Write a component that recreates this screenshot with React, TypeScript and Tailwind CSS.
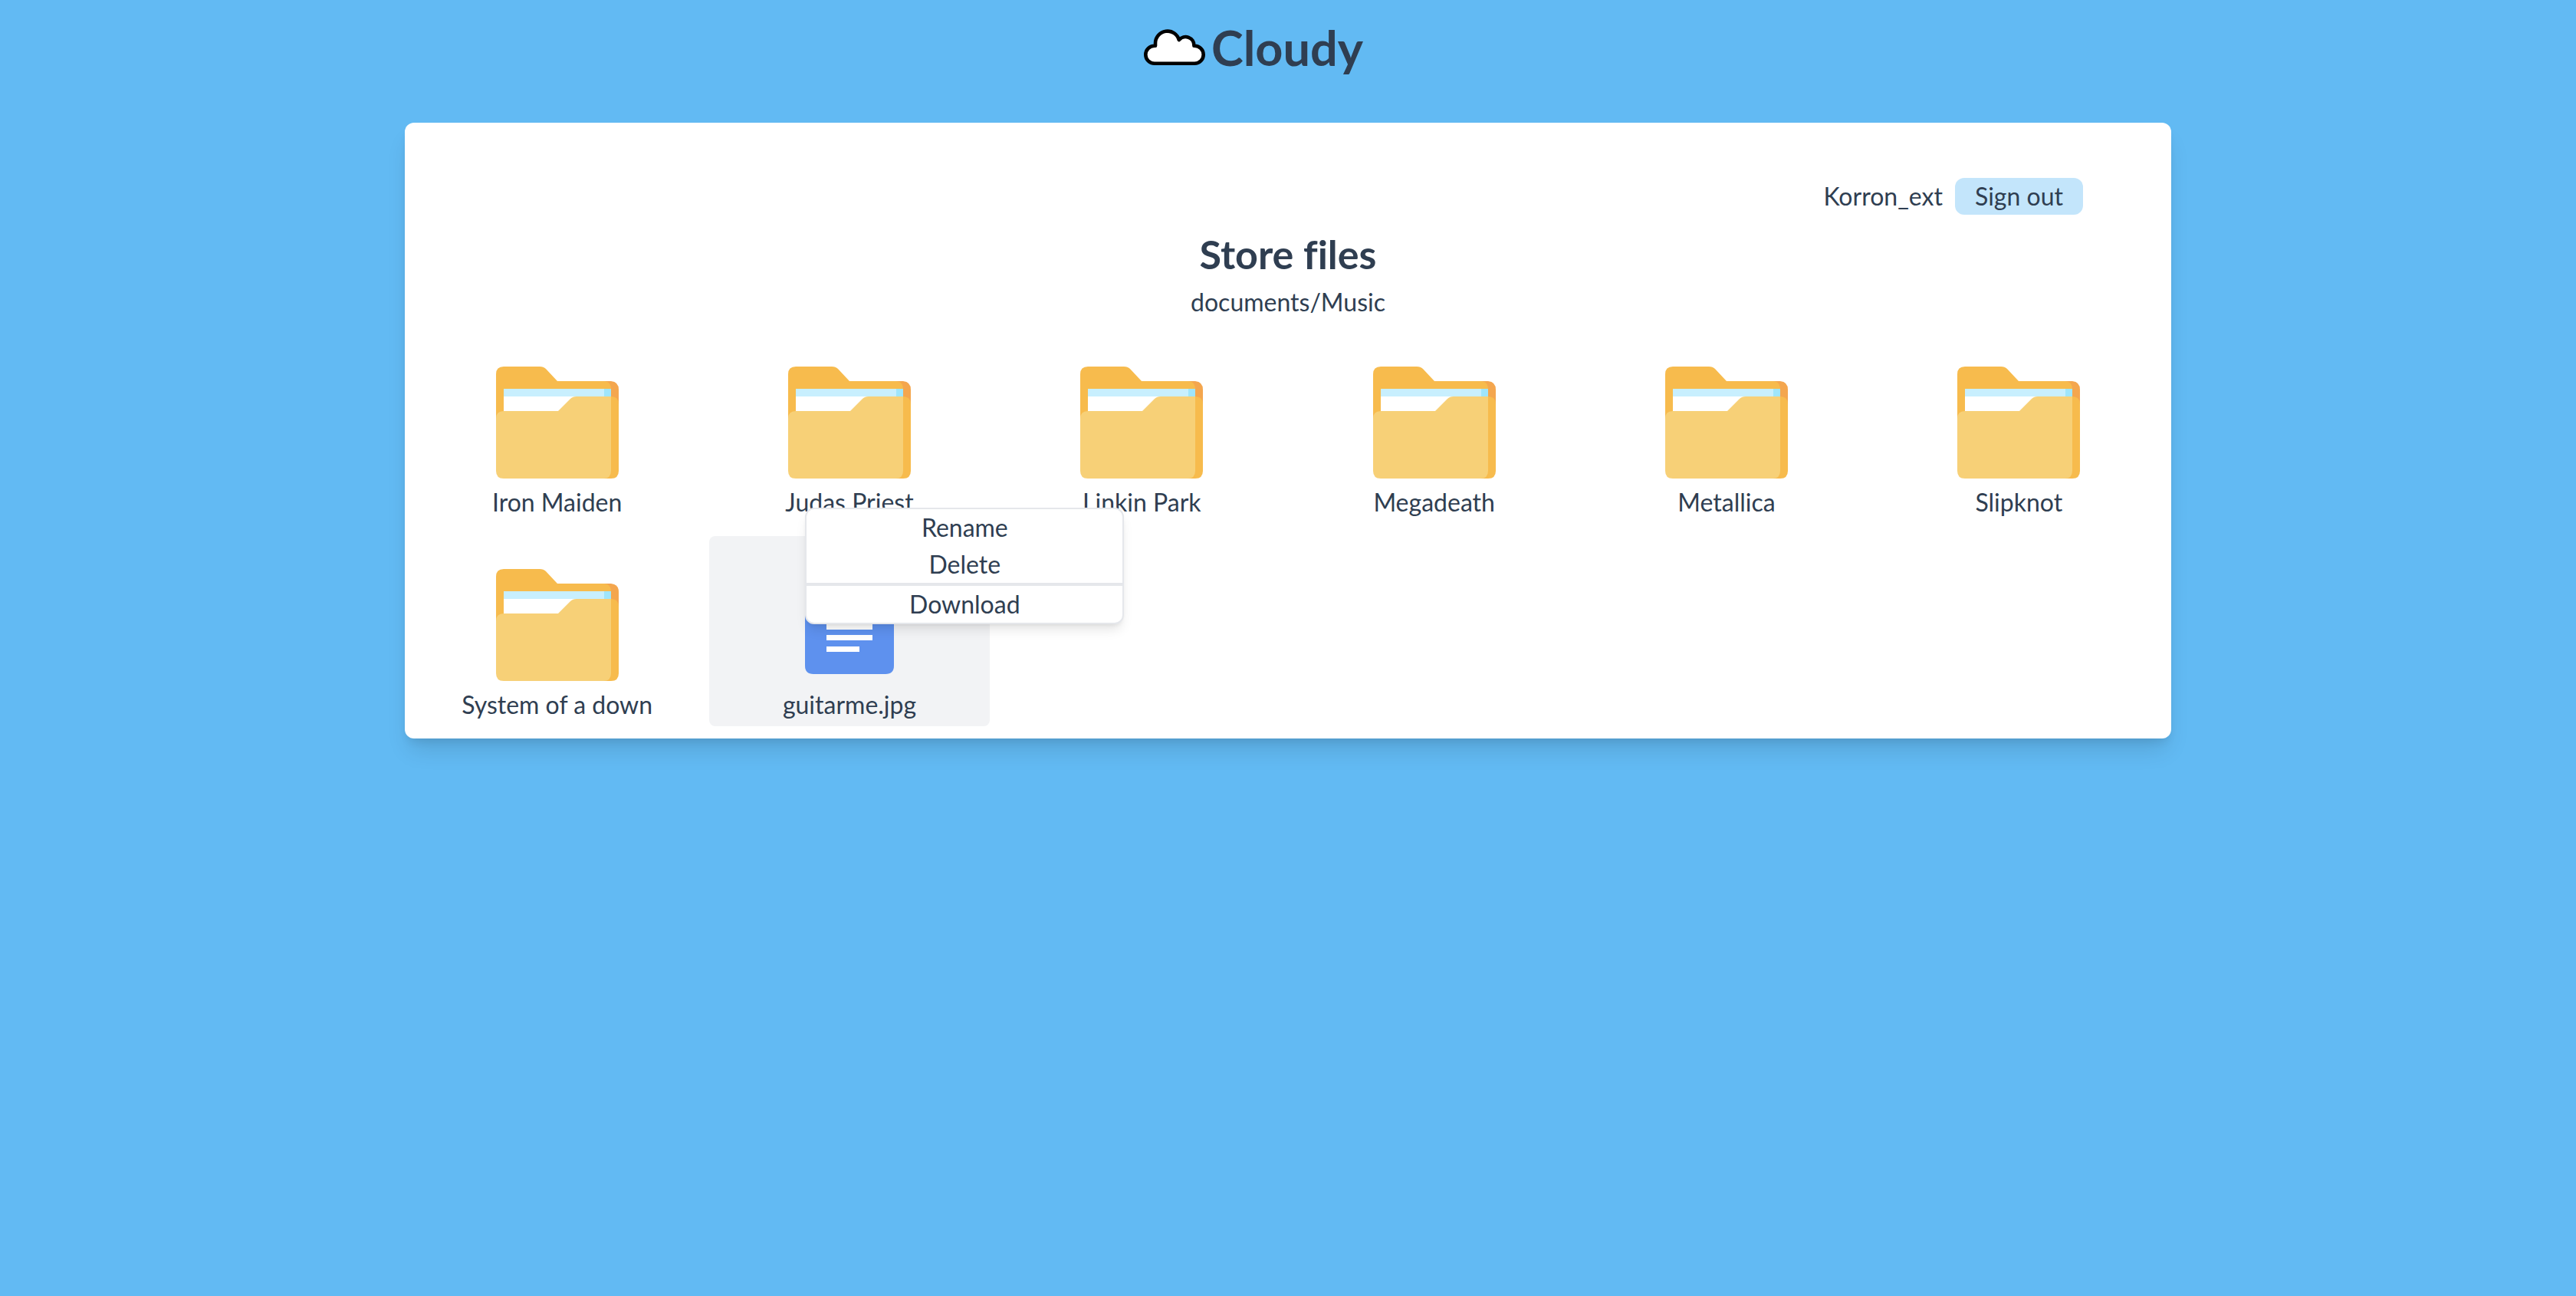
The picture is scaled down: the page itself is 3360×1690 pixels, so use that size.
const folders = ['Iron Maiden', 'Judas Priest', 'Linkin Park', 'Megadeath', 'Metallica', 'Slipknot', 'System of a down'];

function FolderIcon() {
  return (
    <svg viewBox="0 -16 160 176" className="h-44 w-40" aria-hidden="true">
      <path d="M134 26h16q10 1 10 11v30h-16z" fill="#f4a64e" />
      <path d="M0 80V17Q0 7 10 7h47q5 0 8 3l15 16h60q10 0 10 11v43z" fill="#f7bb4d" />
      <path d="M10 36h132v40H10z" fill="#c8effe" />
      <path d="M141 36h9v20h-9z" fill="#9fe5fb" />
      <path d="M10 46h100v40H10z" fill="#fff" />
      <path d="M130 46h20q10 0 10 10v87q0 10-10 10h-20z" fill="#f7bb4d" />
      <path d="M0 75q0-10 10-10h71l16-16q3-3 8-3h45v97q0 10-10 10H10q-10 0-10-10z" fill="#f7d077" />
    </svg>
  );
}

function DocumentIcon() {
  return (
    <svg viewBox="0 0 160 176" className="h-44 w-40" aria-hidden="true">
      <path d="M33 0h65l40 41v108q0 11-11 11H33q-11 0-11-11V11Q22 0 33 0z" fill="#5e91ee" />
      <path d="M98 0l40 41H98z" fill="#a9c6fa" />
      <path d="M50 80h60v7H50zM50 95h60v7H50zM50 109h60v7H50zM50 124h43v7H50z" fill="#fff" />
    </svg>
  );
}

function CloudIcon() {
  return (
    <svg viewBox="0 0 80 48" className="h-12 w-20" aria-hidden="true">
      <path
        d="M13.800 44.700h52.400a11.500 11.500 0 0 0 0-23h-.8a11.100 11.100 0 0 0-19.600-7.700a15.700 15.700 0 0 0-30.800 4.200v3.500h-1.200a11.500 11.500 0 0 0 0 23z"
        fill="#fff"
        stroke="#000"
        strokeWidth="4.600"
        strokeLinejoin="round"
      />
    </svg>
  );
}

const item = 'h-12 w-full cursor-pointer text-center leading-[48px]';

function ContextMenu() {
  return (
    <div role="menu" className="absolute -top-[37px] left-[125px] z-10 w-[416px] rounded-xl border-2 border-gray-200 bg-white shadow-lg">
      <button role="menuitem" className={item}>Rename</button>
      <button role="menuitem" className={item}>Delete</button>
      <hr className="border-t-4 border-gray-200" />
      <button role="menuitem" className={item}>Download</button>
    </div>
  );
}

export default function App() {
  return (
    <div className="min-h-screen bg-[#62baf3] font-['Lato',sans-serif] text-[32px] leading-[48px] text-[#2f3e51] [font-variant-ligatures:none]">
      <header className="flex h-40 items-start justify-center pt-[22px] pr-[90px]">
        <div className="flex items-center gap-2">
          <CloudIcon />
          <h1 className="text-[63px] leading-[80px] font-bold">Cloudy</h1>
        </div>
      </header>
      <main className="mx-auto w-full max-w-[2304px] rounded-xl bg-white px-4 pt-[72px] pb-4 shadow-[0_20px_30px_-6px_rgba(0,0,0,0.12),0_8px_12px_-4px_rgba(0,0,0,0.08)]">
        <div className="flex items-center justify-end gap-4 pr-[99px]">
          <span>Korron_ext</span>
          <button className="h-12 cursor-pointer rounded-xl bg-[#c3e5fb] px-[26px]">Sign out</button>
        </div>
        <div className="flex flex-col items-center pt-3">
          <h2 className="text-[52px] leading-[78px] font-bold">Store files</h2>
          <p>documents/Music</p>
        </div>
        <ul className="grid grid-cols-6 gap-4 pt-[17px]">
          {folders.map((name) => (
            <li key={name} className="flex flex-col items-center rounded-lg pt-5 pb-1">
              <FolderIcon />
              <span>{name}</span>
            </li>
          ))}
          <li className="relative flex flex-col items-center rounded-lg bg-[#f2f3f5] pt-5 pb-1">
            <DocumentIcon />
            <span>guitarme.jpg</span>
            <ContextMenu />
          </li>
        </ul>
      </main>
    </div>
  );
}
